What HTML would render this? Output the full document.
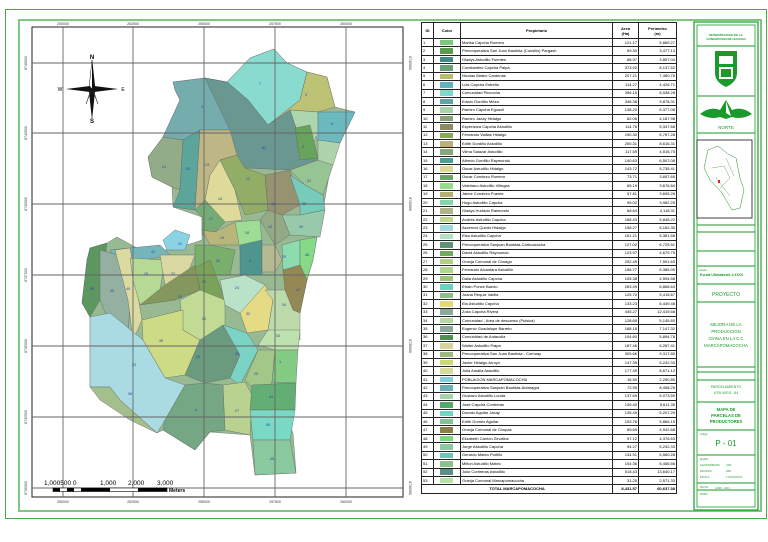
<!DOCTYPE html>
<html><head><meta charset="utf-8"><style>
body{margin:0;width:768px;height:542px;background:#fff;position:relative;overflow:hidden;font-family:"Liberation Sans",sans-serif}
.abs{position:absolute}
table.t{position:absolute;left:421px;top:22px;border-collapse:collapse;font-size:4px;line-height:6px;table-layout:fixed;width:255px}
table.t td{border:1px solid #222;padding:0 1px;height:7.4px;white-space:nowrap;overflow:hidden;box-sizing:border-box}
table.t tr{height:8.43px}
table.t td.sw{padding:0 6px}
table.t td.sw div{width:13px;height:5.5px}
.r{text-align:right}
</style></head><body>
<div class="abs" style="left:5px;top:9px;width:760px;height:508px;border:1px solid #4aa84a"></div>
<div class="abs" style="left:18px;top:19px;width:740px;height:489px;border:2px solid #7cc87c"></div>

<svg class="abs" style="left:0;top:0" width="768" height="542">
<rect x="32" y="27" width="371" height="470" fill="#fff" stroke="#222" stroke-width="1"/>
<g stroke="#555" stroke-width="0.4" stroke-linejoin="round" opacity="0.92">
<polygon fill="#8fb58a" points="274,49 250,58 227,82 205,78 173,82 175,90 180,100 163,137 148,157 152,177 172,187 173,207 202,217 202,240 193,243 167,250 137,248 117,237 107,243 90,248 87,260 82,303 90,317 90,353 90,387 110,387 120,400 157,433 163,430 195,450 210,432 250,435 255,475 296,473 293,433 287,420 295,383 293,360 300,313 307,280 313,260 317,237 323,210 333,153 340,143 355,112 335,107 327,77 307,72 287,63"/>
<polygon fill="#7fd8cc" points="227,82 250,58 274,49 287,63 307,72 300,100 268,125 248,100"/>
<polygon fill="#b8bd6a" points="307,72 327,77 335,107 318,112 290,110 268,125 300,100"/>
<polygon fill="#a8d3a8" points="290,110 318,112 318,140 300,140"/>
<polygon fill="#5fb5bb" points="318,112 355,112 340,143 318,140"/>
<polygon fill="#6aa5a8" points="173,82 205,78 227,82 248,100 230,130 200,130 183,140 163,137 180,100 175,90"/>
<polygon fill="#5e8f86" points="205,78 227,82 248,100 268,125 290,110 300,140 318,160 290,170 245,168 235,155 230,130"/>
<polygon fill="#5c9c4e" points="295,128 310,125 318,158 300,160"/>
<polygon fill="#a9d1a6" points="318,140 340,143 333,165 318,165"/>
<polygon fill="#88a57c" points="148,157 163,137 183,140 180,190 172,187 152,177"/>
<polygon fill="#4f9e92" points="183,140 200,130 195,210 173,207 180,190"/>
<polygon fill="#b9b07a" points="200,130 230,130 237,155 220,160 210,175 205,200 195,210"/>
<polygon fill="#89a85a" points="220,160 237,155 245,168 265,175 268,210 245,215 235,190"/>
<polygon fill="#dcd992" points="210,175 220,160 235,190 242,220 225,222 205,200"/>
<polygon fill="#8f8a66" points="265,175 290,170 300,205 282,215 268,210"/>
<polygon fill="#8fbf8a" points="290,170 318,160 333,165 323,195 305,185"/>
<polygon fill="#6cc7b5" points="290,175 305,185 323,195 325,210 300,215 300,205"/>
<polygon fill="#6aa56a" points="195,210 205,200 225,222 215,232 202,235 202,217"/>
<polygon fill="#8aa37a" points="268,210 282,215 290,235 275,245 260,220"/>
<polygon fill="#8fc6a4" points="282,215 300,215 325,210 320,237 290,235"/>
<polygon fill="#b4b070" points="202,230 215,232 235,222 240,245 210,245"/>
<polygon fill="#95dc8c" points="235,222 260,220 262,245 240,250"/>
<polygon fill="#3f8c86" points="240,245 262,240 262,275 240,275"/>
<polygon fill="#b1b48a" points="262,245 275,245 282,260 275,272 262,272"/>
<polygon fill="#84d8a8" points="282,245 300,240 300,270 283,270"/>
<polygon fill="#7cd67c" points="300,240 317,237 313,260 307,280 300,265"/>
<polygon fill="#6faa60" points="195,245 210,245 235,250 230,275 195,275"/>
<polygon fill="#7fd0e0" points="163,240 175,230 190,235 185,250 167,250"/>
<polygon fill="#6ab0b5" points="110,250 160,245 170,255 120,265"/>
<polygon fill="#4e8f52" points="90,248 107,243 100,300 90,317 82,303 87,260"/>
<polygon fill="#8aaa9a" points="100,250 118,255 130,300 128,340 112,330 100,300"/>
<polygon fill="#d9d99a" points="115,250 130,248 142,320 133,340 128,300"/>
<polygon fill="#b1d68e" points="130,258 165,260 160,290 140,305 133,280"/>
<polygon fill="#d6d49b" points="160,255 195,255 185,280 165,285"/>
<polygon fill="#7a9050" points="140,305 165,285 195,265 200,290 175,300"/>
<polygon fill="#6f9c4c" points="195,268 210,260 225,300 205,310"/>
<polygon fill="#bcd98d" points="180,300 200,290 225,300 225,330 200,340 183,330"/>
<polygon fill="#b4e0c4" points="220,280 245,275 265,285 260,305 240,313 225,305"/>
<polygon fill="#e2d97a" points="240,313 265,285 273,300 268,330 247,333"/>
<polygon fill="#8c7f47" points="283,270 300,265 307,280 300,313 293,310 285,290"/>
<polygon fill="#b8d8a3" points="265,290 285,290 293,310 300,313 300,340 268,330 273,300"/>
<polygon fill="#c9d97a" points="142,320 183,310 183,330 200,340 185,375 165,378 143,340"/>
<polygon fill="#5f9374" points="200,340 223,325 240,355 230,378 205,383 185,375"/>
<polygon fill="#6fd0c0" points="223,325 247,333 258,350 240,385 230,378 240,355"/>
<polygon fill="#b9e0a7" points="268,330 300,330 298,350 275,350 258,345"/>
<polygon fill="#7ac87a" points="275,350 298,350 296,383 272,382"/>
<polygon fill="#9cc37e" points="258,350 275,350 272,382 262,398 245,380"/>
<polygon fill="#a3d8e0" points="90,317 110,313 143,340 165,378 185,385 165,420 157,433 120,400 110,387 90,387 90,353"/>
<polygon fill="#9cba82" points="90,387 110,387 120,400 157,433 130,420 100,400"/>
<polygon fill="#6aa07a" points="165,420 185,385 205,383 223,385 225,430 210,432 195,450 163,430"/>
<polygon fill="#b4cf86" points="223,385 245,382 252,395 250,435 225,430"/>
<polygon fill="#55a86a" points="252,385 296,383 295,410 250,410"/>
<polygon fill="#6ed6c1" points="250,410 295,410 290,440 253,440"/>
<polygon fill="#7fc595" points="253,440 290,440 296,473 255,475"/>
</g>
<g stroke="#666" stroke-width="0.9">
<line x1="63" y1="27" x2="63" y2="497"/><line x1="133" y1="27" x2="133" y2="497"/><line x1="204" y1="27" x2="204" y2="497"/><line x1="275" y1="27" x2="275" y2="497"/><line x1="346" y1="27" x2="346" y2="497"/>
<line x1="32" y1="63" x2="403" y2="63"/><line x1="32" y1="133" x2="403" y2="133"/><line x1="32" y1="204" x2="403" y2="204"/><line x1="32" y1="275" x2="403" y2="275"/><line x1="32" y1="346" x2="403" y2="346"/><line x1="32" y1="417" x2="403" y2="417"/><line x1="32" y1="488" x2="403" y2="488"/>
</g>
<g font-size="3.5" fill="#333" text-anchor="middle">
<text x="63" y="25">200000</text><text x="133" y="25">252500</text><text x="204" y="25">255000</text><text x="275" y="25">257500</text><text x="346" y="25">260000</text>
<text x="63" y="503">250000</text><text x="133" y="503">252500</text><text x="204" y="503">255000</text><text x="275" y="503">257500</text><text x="346" y="503">260000</text>
</g>
<g font-size="3.5" fill="#333" text-anchor="middle">
<text transform="translate(27,63) rotate(-90)">8745000</text><text transform="translate(27,133) rotate(-90)">8742500</text><text transform="translate(27,204) rotate(-90)">8740000</text><text transform="translate(27,275) rotate(-90)">8737500</text><text transform="translate(27,346) rotate(-90)">8735000</text><text transform="translate(27,417) rotate(-90)">8732500</text><text transform="translate(27,488) rotate(-90)">8730000</text>
<text transform="translate(409,63) rotate(90)">8745000</text><text transform="translate(409,204) rotate(90)">8740000</text><text transform="translate(409,346) rotate(90)">8735000</text><text transform="translate(409,488) rotate(90)">8730000</text>
</g>
<g font-size="3.8" fill="#2a4aa8" text-anchor="middle">
<text x="260" y="85">7</text><text x="306" y="96">3</text><text x="332" y="125">6</text><text x="202" y="108">4</text><text x="264" y="149">52</text><text x="303" y="148">2</text><text x="316" y="139">9</text><text x="164" y="168">14</text><text x="188" y="170">15</text><text x="207" y="166">13</text><text x="248" y="180">12</text><text x="220" y="200">16</text><text x="273" y="205">11</text><text x="309" y="182">31</text><text x="304" y="205">32</text><text x="211" y="220">17</text><text x="270" y="228">10</text><text x="301" y="228">49</text><text x="222" y="239">19</text><text x="247" y="234">18</text><text x="250" y="262">3</text><text x="218" y="262">26</text><text x="284" y="258">20</text><text x="307" y="256">48</text><text x="180" y="245">41</text><text x="153" y="253">42</text><text x="92" y="290">36</text><text x="112" y="292">35</text><text x="128" y="290">40</text><text x="146" y="275">28</text><text x="173" y="275">37</text><text x="180" y="298">24</text><text x="204" y="283">20</text><text x="204" y="320">22</text><text x="237" y="289">24</text><text x="248" y="315">32</text><text x="298" y="291">47</text><text x="284" y="306">34</text><text x="161" y="342">39</text><text x="198" y="358">25</text><text x="237" y="355">30</text><text x="278" y="337">53</text><text x="280" y="363">1</text><text x="256" y="375">29</text><text x="134" y="366">23</text><text x="130" y="395">38</text><text x="196" y="411">4</text><text x="237" y="412">27</text><text x="271" y="398">44</text><text x="268" y="426">45</text><text x="272" y="460">46</text>
</g>
<g>
<polygon points="92,60 95,88 92,92 89,88" fill="#fff" stroke="#111" stroke-width="0.5"/>
<polygon points="92,60 92,92 95,88" fill="#111"/>
<polygon points="92,120 95,92 92,88 89,92" fill="#111"/>
<polygon points="66,89 90,86 92,89 90,92" fill="#111"/>
<polygon points="118,89 94,86 92,89 94,92" fill="#111"/>
<polygon points="92,89 86,104 89,95" fill="#fff" stroke="#111" stroke-width="0.4"/>
<polygon points="92,89 98,104 95,95" fill="#fff" stroke="#111" stroke-width="0.4"/>
<text x="92" y="59" font-size="6" font-weight="bold" text-anchor="middle">N</text>
<text x="92" y="123" font-size="6" font-weight="bold" text-anchor="middle">S</text>
<text x="60" y="91" font-size="5" text-anchor="middle">W</text>
<text x="123" y="91" font-size="5" text-anchor="middle">E</text>
</g>
<g>
<rect x="53" y="488" width="114" height="3.5" fill="#fff" stroke="#000" stroke-width="0.6"/>
<rect x="53" y="488" width="7" height="3.5" fill="#000"/><rect x="67" y="488" width="7" height="3.5" fill="#000"/><rect x="81" y="488" width="29" height="3.5" fill="#000"/><rect x="138" y="488" width="29" height="3.5" fill="#000"/>
<text x="44" y="485" font-size="6.5">1,000500 0</text>
<text x="100" y="485" font-size="6.5">1,000</text><text x="128" y="485" font-size="6.5">2,000</text><text x="157" y="485" font-size="6.5">3,000</text>
<text x="169" y="492" font-size="5" font-weight="bold">Meters</text>
</g>
</svg>

<table class="t">
<colgroup><col style="width:12px"><col style="width:27px"><col style="width:152px"><col style="width:26px"><col style="width:38px"></colgroup>
<tr style="height:16px;font-weight:bold"><td style="text-align:center;height:16px;line-height:5px">ID</td><td style="text-align:center">Color</td><td style="text-align:center">Propietario</td><td style="text-align:center;line-height:5px">Area<br>(Ha)</td><td style="text-align:center;line-height:5px">Perimetro<br>(m)</td></tr>
<tr><td>1</td><td class="sw"><div style="background:#7ac87a"></div></td><td>Marisa Capcha Romero</td><td class="r">121.17</td><td class="r">5,869.27</td></tr>
<tr><td>2</td><td class="sw"><div style="background:#5c9c4e"></div></td><td>Precooperativa San Juan Bautista (Consilio) Pargash</td><td class="r">69.30</td><td class="r">3,477.13</td></tr>
<tr><td>3</td><td class="sw"><div style="background:#3f8c86"></div></td><td>Gladys Astudillo Fuentes</td><td class="r">88.97</td><td class="r">3,857.04</td></tr>
<tr><td>4</td><td class="sw"><div style="background:#6aa07a"></div></td><td>Constantino Capcha Paipa</td><td class="r">373.92</td><td class="r">8,137.52</td></tr>
<tr><td>5</td><td class="sw"><div style="background:#b8bd6a"></div></td><td>Nicolas Mateo Cardenas</td><td class="r">207.21</td><td class="r">7,480.78</td></tr>
<tr><td>6</td><td class="sw"><div style="background:#5fb5bb"></div></td><td>Luis Capcha Estrella</td><td class="r">114.27</td><td class="r">4,426.71</td></tr>
<tr><td>7</td><td class="sw"><div style="background:#7fd8cc"></div></td><td>Comunidad Pincocha</td><td class="r">396.15</td><td class="r">8,538.28</td></tr>
<tr><td>8</td><td class="sw"><div style="background:#5fa5a8"></div></td><td>Edwin Gordillo Meza</td><td class="r">348.38</td><td class="r">9,878.31</td></tr>
<tr><td>9</td><td class="sw"><div style="background:#a8d3a8"></div></td><td>Ramiro Capcha Egoavil</td><td class="r">138.20</td><td class="r">6,377.08</td></tr>
<tr><td>10</td><td class="sw"><div style="background:#8aa37a"></div></td><td>Ramiro Jacay Hidalgo</td><td class="r">82.06</td><td class="r">4,187.98</td></tr>
<tr><td>11</td><td class="sw"><div style="background:#8f8a66"></div></td><td>Esperanza Capcha Astudillo</td><td class="r">114.76</td><td class="r">5,347.68</td></tr>
<tr><td>12</td><td class="sw"><div style="background:#89a85a"></div></td><td>Fernando Vaillas Hidalgo</td><td class="r">190.30</td><td class="r">6,767.28</td></tr>
<tr><td>13</td><td class="sw"><div style="background:#b9b07a"></div></td><td>Edith Gordillo Astudillo</td><td class="r">250.31</td><td class="r">8,616.31</td></tr>
<tr><td>14</td><td class="sw"><div style="background:#88a57c"></div></td><td>Vilma Salazar Astudillo</td><td class="r">117.59</td><td class="r">4,516.75</td></tr>
<tr><td>15</td><td class="sw"><div style="background:#4f9e92"></div></td><td>Alfredo Gordillo Raymundo</td><td class="r">140.63</td><td class="r">6,507.08</td></tr>
<tr><td>16</td><td class="sw"><div style="background:#dcd992"></div></td><td>Oscar Astudillo Hidalgo</td><td class="r">143.72</td><td class="r">5,735.41</td></tr>
<tr><td>17</td><td class="sw"><div style="background:#6aa56a"></div></td><td>Oscar Condezo Romero</td><td class="r">73.71</td><td class="r">3,657.65</td></tr>
<tr><td>18</td><td class="sw"><div style="background:#95dc8c"></div></td><td>Valeriano Astudillo Villegas</td><td class="r">65.19</td><td class="r">3,676.84</td></tr>
<tr><td>19</td><td class="sw"><div style="background:#b4b070"></div></td><td>Jaime Condezo Puente</td><td class="r">57.81</td><td class="r">3,695.26</td></tr>
<tr><td>20</td><td class="sw"><div style="background:#84d8a8"></div></td><td>Hugo Astudillo Capcha</td><td class="r">95.02</td><td class="r">3,982.25</td></tr>
<tr><td>21</td><td class="sw"><div style="background:#b1b48a"></div></td><td>Gladys Hurtado Raimundo</td><td class="r">68.64</td><td class="r">4,118.31</td></tr>
<tr><td>22</td><td class="sw"><div style="background:#bcd98d"></div></td><td>Andrés Astudillo Capcha</td><td class="r">168.43</td><td class="r">5,848.22</td></tr>
<tr><td>23</td><td class="sw"><div style="background:#a3d8e0"></div></td><td>Ascencio Quinto Hidalgo</td><td class="r">158.27</td><td class="r">6,162.35</td></tr>
<tr><td>24</td><td class="sw"><div style="background:#b4e0c4"></div></td><td>Elsa Astudillo Capcha</td><td class="r">161.21</td><td class="r">5,381.58</td></tr>
<tr><td>25</td><td class="sw"><div style="background:#5f9374"></div></td><td>Precooperativa Sanjuan Bautista-Carhuacocha</td><td class="r">127.02</td><td class="r">6,725.51</td></tr>
<tr><td>26</td><td class="sw"><div style="background:#6faa60"></div></td><td>David Astudillo Raymundo</td><td class="r">123.97</td><td class="r">4,679.75</td></tr>
<tr><td>27</td><td class="sw"><div style="background:#b4cf86"></div></td><td>Granja Comunal de Chuago</td><td class="r">252.49</td><td class="r">7,591.63</td></tr>
<tr><td>28</td><td class="sw"><div style="background:#b1d68e"></div></td><td>Fernando Alcantara Astudillo</td><td class="r">156.77</td><td class="r">6,385.09</td></tr>
<tr><td>29</td><td class="sw"><div style="background:#9cc37e"></div></td><td>Dalia Astudillo Capcha</td><td class="r">105.38</td><td class="r">4,594.58</td></tr>
<tr><td>30</td><td class="sw"><div style="background:#6fd0c0"></div></td><td>Efrain Ponce Baedo</td><td class="r">263.49</td><td class="r">6,868.64</td></tr>
<tr><td>31</td><td class="sw"><div style="background:#8fbf8a"></div></td><td>Juana Requiz Varilla</td><td class="r">125.70</td><td class="r">5,415.67</td></tr>
<tr><td>32</td><td class="sw"><div style="background:#e2d97a"></div></td><td>Ela Astudillo Capcha</td><td class="r">133.23</td><td class="r">6,449.48</td></tr>
<tr><td>33</td><td class="sw"><div style="background:#8aaa9a"></div></td><td>Zoila Capcha Rivera</td><td class="r">445.27</td><td class="r">12,419.58</td></tr>
<tr><td>34</td><td class="sw"><div style="background:#b8d8a3"></div></td><td>Comunidad - Area de descanso (Pulsica)</td><td class="r">128.69</td><td class="r">5,145.60</td></tr>
<tr><td>35</td><td class="sw"><div style="background:#8aaa9a"></div></td><td>Eugenio Guadalupe Barreto</td><td class="r">168.18</td><td class="r">7,147.32</td></tr>
<tr><td>36</td><td class="sw"><div style="background:#4e8f52"></div></td><td>Comunidad de Antacolla</td><td class="r">104.60</td><td class="r">5,894.78</td></tr>
<tr><td>37</td><td class="sw"><div style="background:#d6d49b"></div></td><td>Walter Astudillo Paipa</td><td class="r">187.46</td><td class="r">6,287.41</td></tr>
<tr><td>38</td><td class="sw"><div style="background:#9cba82"></div></td><td>Precooperativa San Juan Bautista - Curhuay</td><td class="r">305.66</td><td class="r">9,317.85</td></tr>
<tr><td>39</td><td class="sw"><div style="background:#c9d97a"></div></td><td>Javier Hidalgo Arroyo</td><td class="r">147.39</td><td class="r">5,242.33</td></tr>
<tr><td>40</td><td class="sw"><div style="background:#d9d99a"></div></td><td>Julia Amalia Astudillo</td><td class="r">177.49</td><td class="r">8,671.12</td></tr>
<tr><td>41</td><td class="sw"><div style="background:#7fd0e0"></div></td><td>POBLACION MARCAPOMACOCHA</td><td class="r">16.50</td><td class="r">2,250.85</td></tr>
<tr><td>42</td><td class="sw"><div style="background:#6ab0b5"></div></td><td>Precooperativa Sanjuan Bautista-Antaragra</td><td class="r">72.95</td><td class="r">8,458.25</td></tr>
<tr><td>43</td><td class="sw"><div style="background:#a8d3a8"></div></td><td>Gustavo Astudillo Lunda</td><td class="r">137.69</td><td class="r">5,073.59</td></tr>
<tr><td>44</td><td class="sw"><div style="background:#55a86a"></div></td><td>José Capcha Contreras</td><td class="r">139.40</td><td class="r">5,611.35</td></tr>
<tr><td>45</td><td class="sw"><div style="background:#6ed6c1"></div></td><td>Donato Aguilar Jacay</td><td class="r">135.49</td><td class="r">5,207.29</td></tr>
<tr><td>46</td><td class="sw"><div style="background:#7fc595"></div></td><td>Edith Gomez Aguilar</td><td class="r">153.76</td><td class="r">5,866.15</td></tr>
<tr><td>47</td><td class="sw"><div style="background:#8c7f47"></div></td><td>Granja Comunal de Chupas</td><td class="r">89.69</td><td class="r">4,942.68</td></tr>
<tr><td>48</td><td class="sw"><div style="background:#7cd67c"></div></td><td>Elizabeth Carrion Zevallos</td><td class="r">97.12</td><td class="r">4,376.63</td></tr>
<tr><td>49</td><td class="sw"><div style="background:#8fc6a4"></div></td><td>Jorge Astudillo Capcha</td><td class="r">94.27</td><td class="r">5,242.33</td></tr>
<tr><td>50</td><td class="sw"><div style="background:#6cc7b5"></div></td><td>Gerardo Mateo Portillo</td><td class="r">134.91</td><td class="r">5,560.28</td></tr>
<tr><td>51</td><td class="sw"><div style="background:#8fbf8a"></div></td><td>Milton Astudillo Mateo</td><td class="r">104.36</td><td class="r">5,456.56</td></tr>
<tr><td>52</td><td class="sw"><div style="background:#5e8f86"></div></td><td>Julio Contreras Astudillo</td><td class="r">518.43</td><td class="r">13,640.17</td></tr>
<tr><td>53</td><td class="sw"><div style="background:#b9e0a7"></div></td><td>Granja Comunal Marcapomacocha</td><td class="r">31.25</td><td class="r">2,571.33</td></tr>
<tr style="font-weight:bold"><td colspan="3" style="text-align:center">TOTAL MARCAPOMACOCHA</td><td class="r">8,431.57</td><td class="r">60,637.38</td></tr>
</table>

<svg class="abs" style="left:690px;top:18px" width="78" height="500">
<g fill="none" stroke="#1a9a2a">
<rect x="4" y="4" width="64" height="488" stroke-width="1.2"/>
<rect x="7" y="7" width="58" height="482" stroke-width="0.8"/>
<line x1="7" y1="28" x2="65" y2="28"/><line x1="7" y1="78" x2="65" y2="78"/><line x1="7" y1="115" x2="65" y2="115"/>
<line x1="7" y1="207" x2="65" y2="207"/><line x1="7" y1="214" x2="65" y2="214"/><line x1="7" y1="233" x2="65" y2="233"/><line x1="7" y1="248" x2="65" y2="248"/>
<line x1="7" y1="266" x2="65" y2="266"/><line x1="7" y1="284" x2="65" y2="284"/><line x1="7" y1="349" x2="65" y2="349"/><line x1="7" y1="354" x2="65" y2="354"/><line x1="7" y1="362" x2="65" y2="362"/>
<line x1="7" y1="384" x2="65" y2="384"/><line x1="7" y1="412" x2="65" y2="412"/><line x1="7" y1="437" x2="65" y2="437"/><line x1="7" y1="465" x2="65" y2="465"/><line x1="7" y1="472" x2="65" y2="472"/>
</g>
<text x="36" y="18" font-size="3" fill="#1a9a2a" text-anchor="middle" font-weight="bold">MUNICIPALIDAD DE LA</text>
<text x="36" y="22" font-size="3" fill="#1a9a2a" text-anchor="middle" font-weight="bold">CONCEPCION DE HUACHO</text>
<path d="M25 33 H47 V55 Q47 64 36 69 Q25 64 25 55 Z" fill="#1a9a2a"/>
<rect x="29" y="38" width="14" height="8" fill="#fff"/><rect x="29" y="49" width="14" height="12" fill="#fff"/>
<rect x="31" y="51" width="10" height="8" fill="#1a9a2a"/>
<path d="M10 96 Q20 88 30 92 L36 82 L42 92 Q52 88 62 96 Q52 102 42 99 L36 101 L30 99 Q20 102 10 96Z" fill="#1a9a2a"/>
<path d="M36 83 L41 98 L36 95 Z" fill="#fff"/>
<text x="36" y="111" font-size="4.5" fill="#1a9a2a" text-anchor="middle">NORTE</text>
<rect x="7" y="122" width="55" height="78" fill="#fff" stroke="#111" stroke-width="0.8"/>
<path d="M18 132 L28 128 L38 136 L46 140 L50 160 L54 172 L50 190 L42 192 L32 175 L20 162 L14 150 Z" fill="none" stroke="#2a8a2a" stroke-width="0.5"/>
<path d="M22 150 L34 148 L40 160 L30 170 M36 140 L44 158 M26 160 L40 178" fill="none" stroke="#2a8a2a" stroke-width="0.35"/>
<rect x="28" y="162" width="2" height="3" fill="#d22"/>
<text x="9" y="253" font-size="2.6" fill="#1a9a2a">escala</text>
<text x="10" y="258" font-size="3.3" fill="#1a9a2a" font-weight="bold">Escala Ultimaturale 1:XXXX</text>
<text x="36" y="278" font-size="5" fill="#1a9a2a" text-anchor="middle">PROYECTO</text>
<g font-size="4.3" fill="#1a9a2a" text-anchor="middle">
<text x="36" y="308">MEJORA DE LA</text><text x="36" y="315">PRODUCCIÓN</text><text x="36" y="322">OVINA EN LA C.C</text><text x="36" y="329">MARCAPOMACOCHA</text>
</g>
<text x="36" y="370" font-size="3.6" fill="#1a9a2a" text-anchor="middle">PARCELAMIENTO</text>
<text x="36" y="376" font-size="3.6" fill="#1a9a2a" text-anchor="middle">UTM WGS - 84</text>
<g font-size="4.2" fill="#1a9a2a" text-anchor="middle" font-weight="bold">
<text x="36" y="393">MAPA DE</text><text x="36" y="399">PARCELAS DE</text><text x="36" y="405">PRODUCTORES</text>
</g>
<text x="10" y="417" font-size="2.6" fill="#1a9a2a">codigo</text>
<text x="36" y="428" font-size="8" fill="#1a9a2a" text-anchor="middle">P - 01</text>
<g font-size="2.4" fill="#1a9a2a">
<text x="10" y="442">ELABO:</text><text x="10" y="448">LEVANTAMIENTO</text><text x="36" y="448">UGD</text><text x="10" y="454">REVISION</text><text x="36" y="454">ABG</text><text x="10" y="460">ESCALA</text><text x="36" y="460">1:XXXXXXXXX</text>
<text x="10" y="470">FECHA</text><text x="25" y="471">JUNIO - 2013</text><text x="10" y="477">FIRMA</text>
</g>
</svg>
</body></html>
